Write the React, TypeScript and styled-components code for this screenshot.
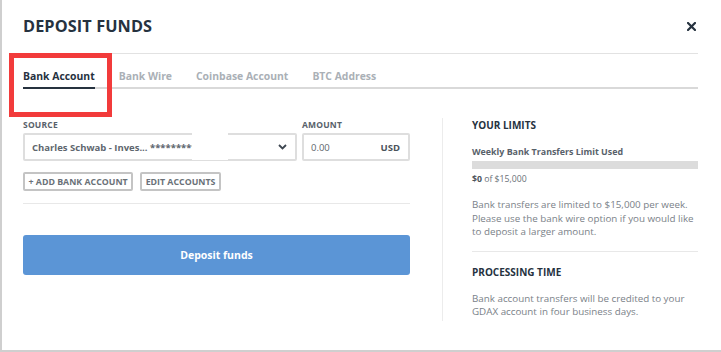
import React from "react";
import styled, { createGlobalStyle } from "styled-components";

const Global = createGlobalStyle`
  html, body { margin: 0; padding: 0; background: #fff; }
  body { font-family: "Open Sans", "Liberation Sans", sans-serif; }
  * { box-sizing: border-box; }
`;

const Modal = styled.div`
  position: relative;
  width: 721px;
  height: 352px;
  border-left: 2px solid #cfcfcf;
  border-bottom: 2px solid #cfcfcf;
  padding: 0 23px 0 21px;
  background: #fff;
`;

const Header = styled.div`
  height: 54px;
  display: flex;
  align-items: center;
  justify-content: space-between;
  border-bottom: 1px solid #e2e2e2;
  padding-bottom: 1px;
`;

const Title = styled.h1`
  margin: 0;
  font-size: 16.3px;
  font-weight: 700;
  color: #26323f;
  letter-spacing: 0.1px;
`;

const Close = styled.button`
  border: 0;
  background: none;
  padding: 0;
  margin-right: 2px;
  display: flex;
  cursor: pointer;
`;

const Tabs = styled.div`
  display: flex;
  gap: 24px;
  height: 35px;
  align-items: flex-end;
  border-bottom: 2px solid #d9d9d9;
`;

const Tab = styled.div<{ $active?: boolean }>`
  font-size: 10.4px;
  font-weight: 700;
  line-height: 14px;
  padding-bottom: 4px;
  margin-bottom: -2px;
  color: ${(p) => (p.$active ? "#26323f" : "#aab0b6")};
  border-bottom: 2px solid ${(p) => (p.$active ? "#26323f" : "transparent")};
`;

const Body = styled.div`
  display: flex;
  padding-top: 29px;
`;

const LeftCol = styled.div`
  width: 387px;
  flex: none;
`;

const RightCol = styled.div`
  margin-left: 32px;
  border-left: 1px solid #ececec;
  padding-left: 29px;
  width: 256px;
  height: 203px;
`;

const FieldRow = styled.div`
  display: flex;
  gap: 5px;
`;

const Field = styled.div<{ $w: number }>`
  width: ${(p) => p.$w}px;
`;

const Label = styled.div`
  font-size: 8.5px;
  font-weight: 700;
  color: #58616a;
  line-height: 12px;
  margin-top: 1px;
  margin-bottom: 2px;
  letter-spacing: 0.2px;
`;

const InputBox = styled.div`
  height: 28px;
  border: 2px solid #dedede;
  border-radius: 2px;
  display: flex;
  align-items: center;
  justify-content: space-between;
  padding: 0 8px 0 7px;
  font-size: 9.5px;
  color: #5e666e;
`;

const SelectText = styled.span`
  font-weight: 700;
  white-space: nowrap;
  overflow: hidden;
`;

const Amount = styled.span`
  font-weight: 400;
`;

const Currency = styled.span`
  font-weight: 700;
  color: #4b535b;
`;

const Actions = styled.div`
  display: flex;
  gap: 7px;
  margin-top: 11px;
  padding-bottom: 12px;
  border-bottom: 1px solid #e8e8e8;
`;

const SmallButton = styled.button`
  height: 19px;
  border: 2px solid #c4c4c4;
  border-radius: 2px;
  background: #fff;
  padding: 0 3.5px;
  font-family: inherit;
  font-size: 8.8px;
  font-weight: 700;
  color: #6a7178;
  text-transform: uppercase;
  line-height: 14px;
`;

const Primary = styled.button`
  margin-top: 31px;
  width: 100%;
  height: 40px;
  border: 0;
  border-radius: 3px;
  background: #5b95d6;
  color: #fff;
  font-family: inherit;
  font-size: 10.5px;
  font-weight: 700;
`;

const SectionTitle = styled.div`
  font-size: 10px;
  font-weight: 700;
  color: #26323f;
  line-height: 14px;
`;

const SubTitle = styled.div`
  margin-top: 14px;
  font-size: 8.9px;
  font-weight: 700;
  color: #58616a;
  line-height: 12px;
`;

const Bar = styled.div`
  margin-top: 3px;
  height: 8px;
  background: #dcdcdc;
`;

const Small = styled.div`
  margin-top: 4px;
  font-size: 8.7px;
  color: #6a7178;
  line-height: 12px;
  b { color: #4b535b; }
`;

const Para = styled.p`
  margin: 13px 0 0;
  font-size: 9.8px;
  line-height: 13.5px;
  color: #7a8188;
`;

const Divider = styled.div`
  margin: 12px 0 13px;
  border-top: 1px solid #e8e8e8;
`;

const Highlight = styled.div`
  position: absolute;
  left: 7px;
  top: 53px;
  width: 103px;
  height: 64px;
  border: 5px solid #f23b3b;
  pointer-events: none;
`;

const Redact = styled.div`
  position: absolute;
  left: 190px;
  top: 132px;
  width: 36px;
  height: 28px;
  background: #fff;
`;

export default function App() {
  return (
    <>
      <Global />
      <Modal>
        <Header>
          <Title>DEPOSIT FUNDS</Title>
          <Close aria-label="close">
            <svg width="9" height="9" viewBox="0 0 9 9">
              <path d="M1 1L8 8M8 1L1 8" stroke="#26323f" strokeWidth="2.2" strokeLinecap="square" />
            </svg>
          </Close>
        </Header>
        <Tabs>
          <Tab $active>Bank Account</Tab>
          <Tab>Bank Wire</Tab>
          <Tab>Coinbase Account</Tab>
          <Tab>BTC Address</Tab>
        </Tabs>
        <Body>
          <LeftCol>
            <FieldRow>
              <Field $w={274}>
                <Label>SOURCE</Label>
                <InputBox>
                  <SelectText>Charles Schwab - Inves... *************</SelectText>
                  <svg width="9" height="6" viewBox="0 0 9 6">
                    <path d="M1 1L4.5 4.5L8 1" stroke="#3d4650" strokeWidth="1.8" fill="none" />
                  </svg>
                </InputBox>
              </Field>
              <Field $w={108}>
                <Label>AMOUNT</Label>
                <InputBox>
                  <Amount>0.00</Amount>
                  <Currency>USD</Currency>
                </InputBox>
              </Field>
            </FieldRow>
            <Actions>
              <SmallButton>+ Add bank account</SmallButton>
              <SmallButton>Edit accounts</SmallButton>
            </Actions>
            <Primary>Deposit funds</Primary>
          </LeftCol>
          <RightCol>
            <SectionTitle>YOUR LIMITS</SectionTitle>
            <SubTitle>Weekly Bank Transfers Limit Used</SubTitle>
            <Bar />
            <Small>
              <b>$0</b> of $15,000
            </Small>
            <Para>
              Bank transfers are limited to $15,000 per week. Please use the bank wire option if you would like to
              deposit a larger amount.
            </Para>
            <Divider />
            <SectionTitle>PROCESSING TIME</SectionTitle>
            <Para>Bank account transfers will be credited to your GDAX account in four business days.</Para>
          </RightCol>
        </Body>
        <Redact />
        <Highlight />
      </Modal>
    </>
  );
}
